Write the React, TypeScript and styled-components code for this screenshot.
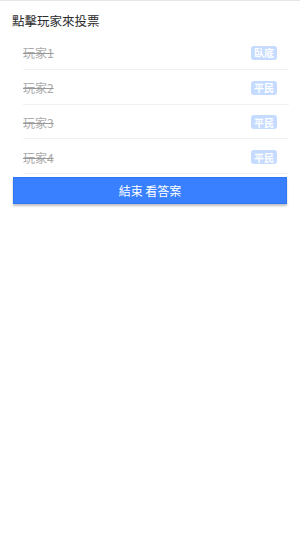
import React from 'react';
import styled, { createGlobalStyle } from 'styled-components';

const GlobalStyle = createGlobalStyle`
  html, body {
    margin: 0;
    padding: 0;
    background: #ffffff;
    font-family: "Noto Sans CJK TC", "Noto Sans CJK SC", "Liberation Sans", sans-serif;
  }
`;

const Page = styled.div`
  width: 300px;
  min-height: 533px;
  box-shadow: inset 0 1px 0 #e6e6e6;
  padding-top: 11px;
  box-sizing: border-box;
`;

const Title = styled.div`
  padding: 0 12px;
  font-size: 12.5px;
  line-height: 20px;
  color: #2a2a2a;
`;

const List = styled.ul`
  list-style: none;
  margin: 4px 0 0 23px;
  padding: 0 11px 0 0;
`;

const Row = styled.li`
  display: flex;
  align-items: center;
  justify-content: space-between;
  box-sizing: border-box;
  height: 34.8px;
  padding: 2px 12px 0 0;
  border-bottom: 1px solid #f1f1f1;
`;

const Name = styled.span`
  font-size: 12px;
  color: #aaaaaa;
  text-decoration: line-through;
  text-decoration-color: #999;
`;

const Badge = styled.span`
  display: inline-flex;
  align-items: center;
  justify-content: center;
  height: 14px;
  padding: 0 3px;
  border-radius: 3px;
  background: #c5dbff;
  color: #ffffff;
  font-size: 10px;
  font-weight: 700;
`;

const Footer = styled.div`
  padding: 3px 13px 0;
`;

const Button = styled.button`
  display: block;
  width: 100%;
  height: 27px;
  border: 1px solid #2f78f5;
  background: #3880ff;
  color: #ffffff;
  font-family: inherit;
  font-size: 12px;
  box-shadow: 0 2px 2px rgba(0, 0, 0, 0.25);
  cursor: pointer;
`;

const players = [
  { name: '玩家1', role: '臥底' },
  { name: '玩家2', role: '平民' },
  { name: '玩家3', role: '平民' },
  { name: '玩家4', role: '平民' },
];

const App: React.FC = () => (
  <Page>
    <GlobalStyle />
    <Title>點擊玩家來投票</Title>
    <List>
      {players.map((p) => (
        <Row key={p.name}>
          <Name>{p.name}</Name>
          <Badge>{p.role}</Badge>
        </Row>
      ))}
    </List>
    <Footer>
      <Button>結束 看答案</Button>
    </Footer>
  </Page>
);

export default App;
